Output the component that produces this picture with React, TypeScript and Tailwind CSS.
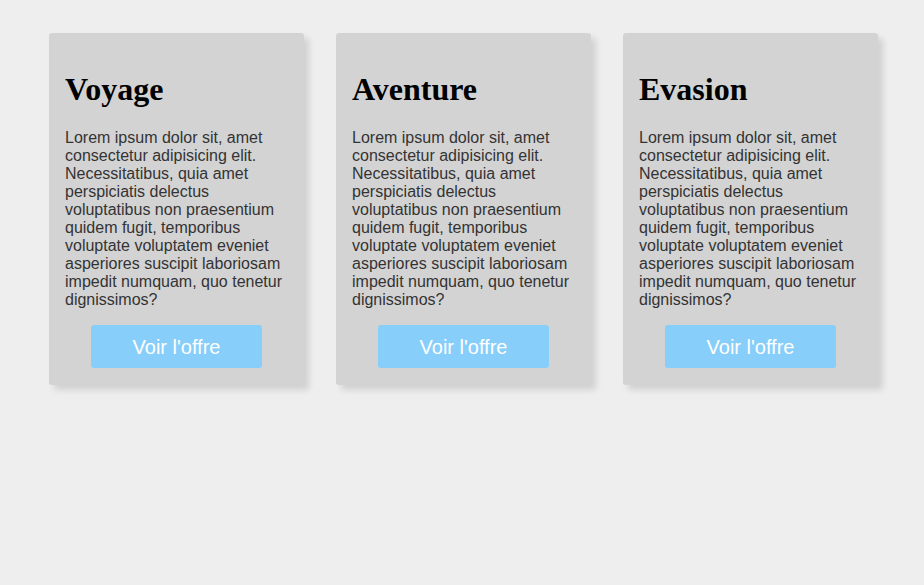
const cards = ["Voyage", "Aventure", "Evasion"]

const lorem =
  "Lorem ipsum dolor sit, amet consectetur adipisicing elit. Necessitatibus, quia amet perspiciatis delectus voluptatibus non praesentium quidem fugit, temporibus voluptate voluptatem eveniet asperiores suscipit laboriosam impedit numquam, quo tenetur dignissimos?"

export default function App() {
  return (
    <div className="min-h-[585px] bg-[#eeeeee] pl-[49px] pt-[33px]">
      <div className="flex gap-8">
        {cards.map((title) => (
          <div
            key={title}
            className="w-[255px] rounded-[3px] bg-[#d3d3d3] px-4 pt-4 pb-[17px] shadow-[5px_5px_6px_rgba(0,0,0,0.12)]"
          >
            <h1 className="mt-[22px] mb-[21px] font-['Liberation_Serif',serif] text-[32px] font-bold leading-[37px] text-black">
              {title}
            </h1>
            <p className="mb-4 font-['Liberation_Sans',Arial,sans-serif] text-base leading-[18px] text-[#333]">
              {lorem}
            </p>
            <div className="flex justify-center">
              <button className="h-[43px] w-[171px] rounded-[3px] bg-[#87cefa] font-['Liberation_Sans',Arial,sans-serif] text-[20px] text-white">
                Voir l'offre
              </button>
            </div>
          </div>
        ))}
      </div>
    </div>
  )
}
